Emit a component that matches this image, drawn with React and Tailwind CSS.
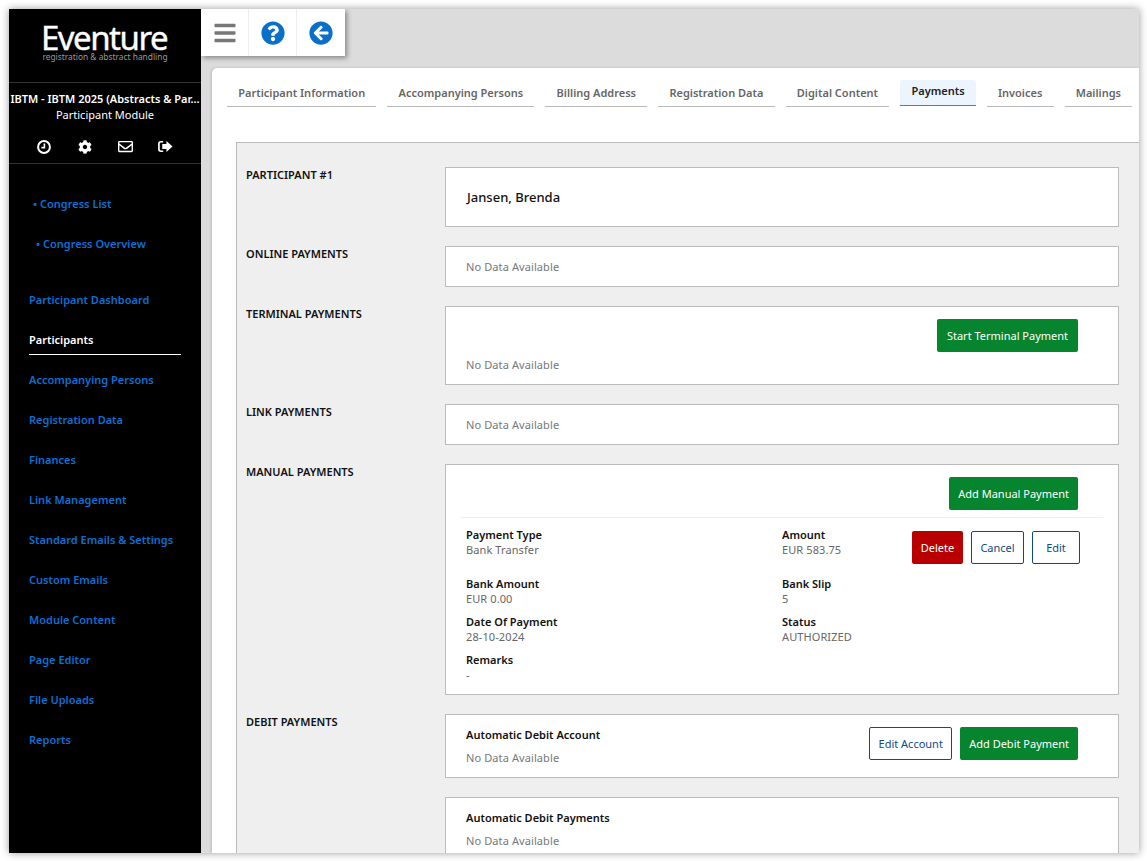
import React from "react";
import { FaBars, FaQuestionCircle, FaArrowCircleLeft, FaCog, FaRegEnvelope } from "react-icons/fa";

const tabs = [
  "Participant Information",
  "Accompanying Persons",
  "Billing Address",
  "Registration Data",
  "Digital Content",
  "Payments",
  "Invoices",
  "Mailings",
];

const navItems = [
  "Participant Dashboard",
  "Participants",
  "Accompanying Persons",
  "Registration Data",
  "Finances",
  "Link Management",
  "Standard Emails & Settings",
  "Custom Emails",
  "Module Content",
  "Page Editor",
  "File Uploads",
  "Reports",
];

const ClockIcon = ({ className }) => (
  <svg viewBox="0 0 14 14" className={className} fill="none" stroke="currentColor">
    <circle cx="7" cy="7" r="5.9" strokeWidth="2" />
    <path d="M7.4 3.4V7.6H4.4" strokeWidth="1.6" />
  </svg>
);

const SignOutIcon = ({ className }) => (
  <svg viewBox="0 0 16 14" className={className} fill="currentColor">
    <path d="M5.5 1H3a3 3 0 0 0-3 3v6a3 3 0 0 0 3 3h2.5V11.2H3A1.2 1.2 0 0 1 1.8 10V4A1.2 1.2 0 0 1 3 2.8h2.5z" />
    <path d="M9 1.2 15.6 7 9 12.8V9.6H4.5V4.4H9z" />
  </svg>
);

const Sidebar = () => (
  <aside className="w-[192px] shrink-0 bg-black text-white flex flex-col">
    <div className="h-[74px] border-b border-[#333] flex flex-col items-center pt-[14px]">
      <div className="text-[33px] leading-[30px] tracking-[-1.5px] mr-[2px] [-webkit-text-stroke:0.4px_white] font-['Liberation_Sans',sans-serif]">Eventure</div>
      <div className="text-[8.4px] leading-[8px] text-[#999] font-['Liberation_Sans',sans-serif]">registration &amp; abstract handling</div>
    </div>
    <div className="h-[81px] border-b border-[#333] text-center">
      <div className="mt-[8px] font-semibold text-[11px] leading-4 whitespace-nowrap overflow-hidden">IBTM - IBTM 2025 (Abstracts &amp; Par...</div>
      <div className="text-[11px] leading-4">Participant Module</div>
      <div className="flex justify-center items-center mt-[16px]">
        <ClockIcon className="w-[14px] h-[14px] mr-[27px]" />
        <FaCog className="w-[14px] h-[14px] mr-[25px]" />
        <FaRegEnvelope className="w-[17px] h-[15px] mr-[24px]" />
        <SignOutIcon className="w-[15px] h-[13px]" />
      </div>
    </div>
    <div className="pt-[20px] font-semibold text-[11px] text-[#0a6fd6]">
      <div className="h-10 flex items-center pl-[24px]">• Congress List</div>
      <div className="h-10 flex items-center pl-[27px]">• Congress Overview</div>
    </div>
    <nav className="mt-[16px] font-semibold text-[11px] text-[#0a6fd6]">
      {navItems.map((item) =>
        item === "Participants" ? (
          <div key={item} className="h-10">
            <div className="h-[35px] pt-[12px] leading-4 mx-[20px] w-[152px] text-white border-b border-white">{item}</div>
          </div>
        ) : (
          <div key={item} className="h-10 flex items-center pl-[20px]">
            {item}
          </div>
        )
      )}
    </nav>
  </aside>
);

const Toolbar = () => (
  <div className="h-[47px] w-[144px] bg-white flex shadow-[2px_2px_5px_rgba(0,0,0,0.4)]">
    <div className="w-[48px] flex items-center justify-center border-r border-[#eee] text-[#777]">
      <FaBars className="w-[22px] h-[24px]" />
    </div>
    <div className="w-[48px] flex items-center justify-center border-r border-[#eee] text-[#0a6fc9]">
      <FaQuestionCircle className="w-[24px] h-[24px]" />
    </div>
    <div className="w-[48px] flex items-center justify-center text-[#0a6fc9]">
      <FaArrowCircleLeft className="w-[24px] h-[24px]" />
    </div>
  </div>
);

const Tabs = () => (
  <div className="flex gap-[11px] pl-[15px] pt-[12px] h-[74px] whitespace-nowrap">
    {tabs.map((tab) =>
      tab === "Payments" ? (
        <div key={tab} className="h-[26px] px-[11.2px] flex items-center pb-[2px] font-semibold text-[11px] text-[#222] bg-[#ecf5fd] rounded-t-[3px] border-b border-[#2c86d1]">
          {tab}
        </div>
      ) : (
        <div key={tab} className="h-[27px] px-[11.2px] flex items-center font-semibold text-[11px] text-[#666] border-b border-[#bbb]">
          {tab}
        </div>
      )
    )}
  </div>
);

const Box = ({ className = "", children }) => (
  <div className={`bg-white border border-[#bbb] px-[20px] ${className}`}>{children}</div>
);

const NoData = ({ className = "" }) => (
  <div className={`text-[11px] leading-4 tracking-[0.1px] text-[#777] ${className}`}>No Data Available</div>
);

const GreenButton = ({ children, className = "px-[9px]" }) => (
  <button className={`h-[33px] pt-[1px] bg-[#06842e] text-white text-[11px] rounded-[2px] ${className}`}>{children}</button>
);

const OutlineButton = ({ children, className = "" }) => (
  <button className={`h-[33px] pt-[1px] border border-[#0f4a87] text-[#0f4a87] text-[11px] rounded-[2px] bg-white ${className}`}>{children}</button>
);

const Field = ({ label, value, className = "" }) => (
  <div className={className}>
    <div className="font-semibold text-[11px] leading-[15px] text-[#111]">{label}</div>
    <div className="text-[11px] leading-[15px] tracking-[0.1px] text-[#666]">{value}</div>
  </div>
);

const Row = ({ label, children }) => (
  <div className="flex mb-[19px]">
    <div className="w-[199px] shrink-0 font-semibold text-[11px] leading-4 text-[#111]">{label}</div>
    <div className="flex-1 min-w-0">{children}</div>
  </div>
);

export default function App() {
  return (
    <div className="h-[861px] w-full bg-white pt-[9px] pl-[9px] pr-[8px] pb-[8px] overflow-hidden font-['Open_Sans',sans-serif]">
      <div className="h-[844px] flex bg-[#dcdcdc] overflow-hidden shadow-[0_0_8px_rgba(0,0,0,0.4)]">
        <Sidebar />
        <main className="flex-1 min-w-0 flex flex-col">
          <Toolbar />
          <div className="flex-1 mt-[12px] ml-[11px] bg-white rounded-tl-[5px] overflow-hidden shadow-[-1px_0_3px_rgba(0,0,0,0.15)]">
            <Tabs />
            <div className="ml-[24px] h-full bg-[#efefef] border-l border-t border-[#bbb] pt-[24px] pl-[9px] pr-[20px]">
              <Row label="PARTICIPANT #1">
                <Box className="h-[60px] flex items-center">
                  <span className="font-medium text-[13px] text-[#111] pl-[1px] pt-[1px]">Jansen, Brenda</span>
                </Box>
              </Row>
              <Row label="ONLINE PAYMENTS">
                <Box className="h-[41px] flex items-center">
                  <NoData />
                </Box>
              </Row>
              <Row label="TERMINAL PAYMENTS">
                <Box className="h-[79px] pt-[12px]">
                  <div className="flex justify-end pr-[20px]">
                    <GreenButton className="w-[141px]">Start Terminal Payment</GreenButton>
                  </div>
                  <NoData className="mt-[5px]" />
                </Box>
              </Row>
              <Row label="LINK PAYMENTS">
                <Box className="h-[41px] flex items-center">
                  <NoData />
                </Box>
              </Row>
              <Row label="MANUAL PAYMENTS">
                <Box className="h-[231px] pt-[12px] !px-[15px]">
                  <div className="flex justify-end pr-[25px] pb-[7px] border-b border-[#eee]">
                    <GreenButton>Add Manual Payment</GreenButton>
                  </div>
                  <div className="pl-[5px] pt-[9px]">
                    <div className="flex">
                      <Field label="Payment Type" value="Bank Transfer" className="w-[316px]" />
                      <Field label="Amount" value="EUR 583.75" className="w-[130px]" />
                      <div className="flex gap-[8px] pt-[4px] h-[30px]">
                        <button className="h-[33px] pt-[1px] w-[51px] bg-[#b80000] text-white text-[11px] rounded-[2px]">Delete</button>
                        <OutlineButton className="w-[53px]">Cancel</OutlineButton>
                        <OutlineButton className="w-[48px]">Edit</OutlineButton>
                      </div>
                    </div>
                    <div className="flex mt-[19px]">
                      <Field label="Bank Amount" value="EUR 0.00" className="w-[316px]" />
                      <Field label="Bank Slip" value="5" />
                    </div>
                    <div className="flex mt-[8px]">
                      <Field label="Date Of Payment" value="28-10-2024" className="w-[316px]" />
                      <Field label="Status" value="AUTHORIZED" />
                    </div>
                    <Field label="Remarks" value="-" className="mt-[8px]" />
                  </div>
                </Box>
              </Row>
              <Row label="DEBIT PAYMENTS">
                <Box className="h-[64px] flex justify-between">
                  <div className="pt-[12px]">
                    <div className="font-semibold text-[11px] leading-4 text-[#111]">Automatic Debit Account</div>
                    <NoData className="mt-[7px]" />
                  </div>
                  <div className="flex gap-[8px] pt-[12px] pr-[20px]">
                    <OutlineButton className="w-[83px]">Edit Account</OutlineButton>
                    <GreenButton>Add Debit Payment</GreenButton>
                  </div>
                </Box>
                <Box className="h-[80px] mt-[19px] pt-[12px]">
                  <div className="font-semibold text-[11px] leading-4 text-[#111]">Automatic Debit Payments</div>
                  <NoData className="mt-[7px]" />
                </Box>
              </Row>
            </div>
          </div>
        </main>
      </div>
    </div>
  );
}
